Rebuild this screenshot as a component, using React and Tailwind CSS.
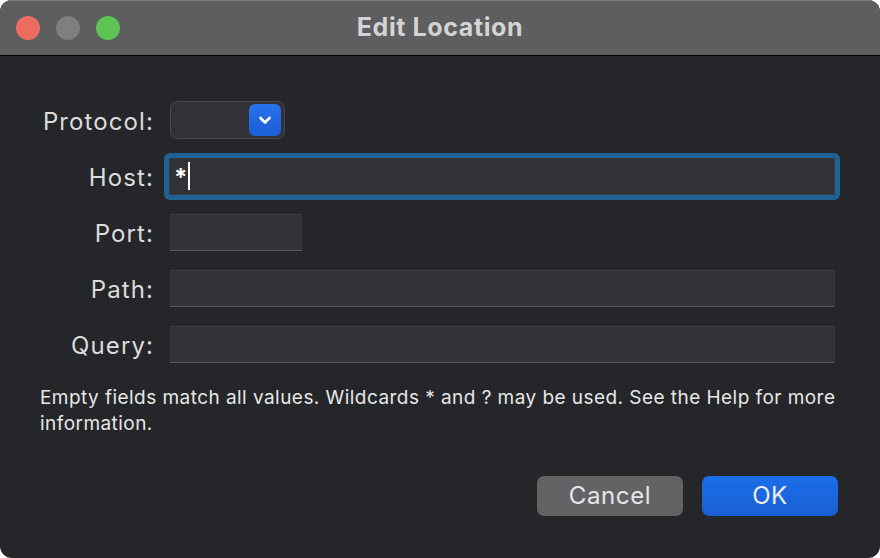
import React from "react";

const font = { fontFamily: "Inter, 'Noto Sans', sans-serif" };

const Field = ({ width = "w-[665px]", children }) => (
  <div
    className={`${width} h-[37px] bg-[#313136] border border-[#3c3c40] border-b-[#5a5a5e] flex items-center`}
  >
    {children}
  </div>
);

const Row = ({ label, children }) => (
  <div className="flex h-[56px] items-center">
    <div className="w-[154px] pt-[3px] text-right text-[24px] text-[#dcdcdc] tracking-[1.1px]">{label}</div>
    <div className="ml-[16px] flex items-center">{children}</div>
  </div>
);

export default function App() {
  return (
    <div className="w-[880px] h-[558px] bg-white" style={font}>
      <div className="w-full h-full rounded-[12px] overflow-hidden flex flex-col bg-[#252629]">
        {/* Title bar */}
        <div className="h-[56px] bg-[#5d5e60] border-t border-[#7c7c7e] border-b border-b-black flex items-center relative">
          <div className="flex gap-[16px] pl-[16px]">
            <span className="w-[24px] h-[24px] rounded-full bg-[#ee6b5f]" />
            <span className="w-[24px] h-[24px] rounded-full bg-[#7f7f81]" />
            <span className="w-[24px] h-[24px] rounded-full bg-[#5ec453]" />
          </div>
          <div className="absolute inset-0 flex items-center justify-center text-[25px] tracking-[0.6px] font-bold text-[#d3d3d4]">
            Edit Location
          </div>
        </div>

        {/* Form */}
        <div className="flex flex-col pt-[36px]">
          <Row label="Protocol:">
            <div className="w-[115px] h-[38px] rounded-[7px] bg-[#323236] border border-[#47474b] flex items-center justify-end pr-[3px]">
              <div className="w-[32px] h-[32px] rounded-[6px] bg-gradient-to-b from-[#2a72ec] to-[#1b5ed6] flex items-center justify-center">
                <svg width="16" height="16" viewBox="0 0 16 16" fill="none">
                  <path d="M3.5 6l4.5 4.5L12.5 6" stroke="white" strokeWidth="2.6" strokeLinecap="round" strokeLinejoin="round" />
                </svg>
              </div>
            </div>
          </Row>
          <Row label="Host:">
            <div className="-ml-[6px] p-[5px] rounded-[6px] bg-[#1f6396]">
              <div className="w-[666px] h-[37px] bg-[#313136] border border-[#3a3a3e] flex items-center pl-[4px]">
                <span className="text-[24px] font-bold text-white leading-none pt-[4px]">*</span>
                <span className="ml-[1px] w-[2px] h-[28px] bg-white" />
              </div>
            </div>
          </Row>
          <Row label="Port:">
            <Field width="w-[132px]" />
          </Row>
          <Row label="Path:">
            <Field />
          </Row>
          <Row label="Query:">
            <Field />
          </Row>
        </div>

        <p className="pl-[40px] pr-[36px] mt-[13px] text-[19px] tracking-[0.45px] leading-[26px] text-[#e6e6e6]">
          Empty fields match all values. Wildcards * and ? may be used. See the Help for more information.
        </p>

        <div className="flex justify-end gap-[19px] pr-[42px] mt-[39px]">
          <button className="w-[146px] h-[40px] rounded-[7px] bg-[#636365] text-[24px] tracking-[0.6px] text-[#e6e6e6]">
            Cancel
          </button>
          <button className="w-[136px] h-[40px] rounded-[7px] bg-gradient-to-b from-[#1b6eea] to-[#1a5fd2] text-[24px] tracking-[0.6px] text-[#eeeeee]">
            OK
          </button>
        </div>
      </div>
    </div>
  );
}
